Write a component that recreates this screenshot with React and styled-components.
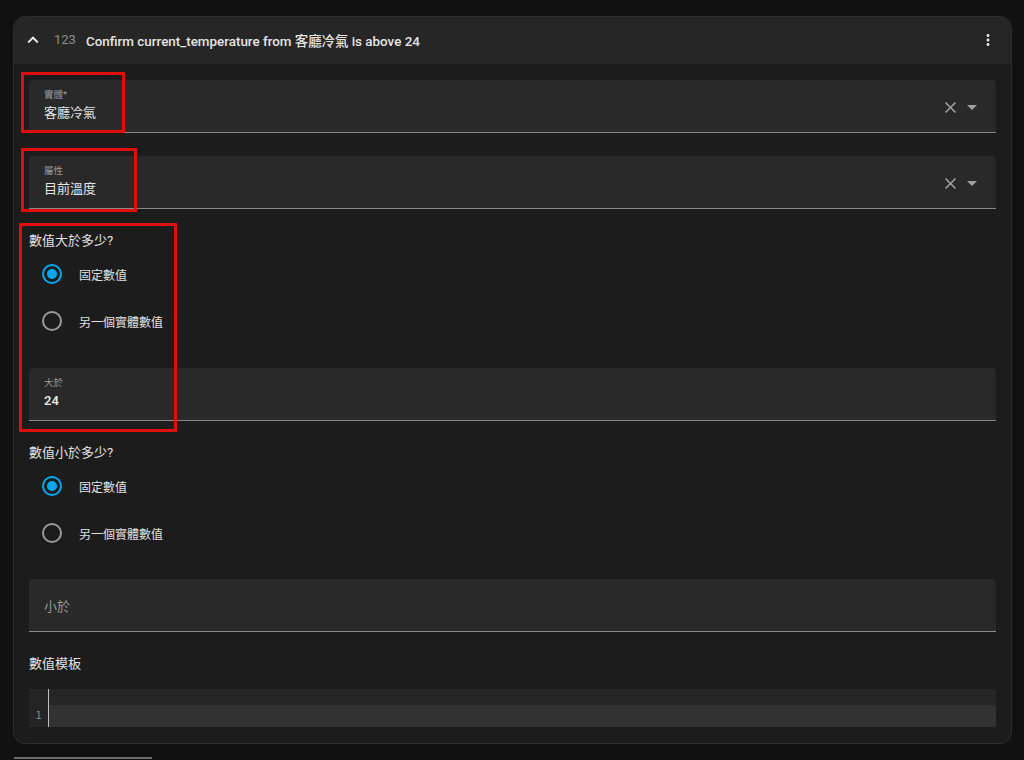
import React from 'react';
import styled, { createGlobalStyle } from 'styled-components';

const GlobalStyle = createGlobalStyle`
  html, body {
    margin: 0;
    padding: 0;
    background: #111111;
  }
  body {
    font-family: Roboto, "Noto Sans CJK TC", "Noto Sans", sans-serif;
    color: #e1e1e1;
  }
`;

const Page = styled.div`
  width: 1024px;
  height: 760px;
  overflow: hidden;
  position: relative;
  padding: 16px 12px 0 13px;
  box-sizing: border-box;
`;

const Card = styled.section`
  width: 999px;
  background: #1c1c1c;
  border: 1px solid #2c2c2c;
  border-radius: 12px;
  overflow: hidden;
  box-sizing: border-box;
`;

const Header = styled.header`
  height: 47px;
  background: #262626;
  display: flex;
  align-items: center;
  padding: 0 14px 2px 8px;
  box-sizing: border-box;
`;

const HeaderIcon = styled.span`
  width: 22px;
  flex-shrink: 0;
  display: flex;
  align-items: center;
  justify-content: center;
  color: #e8e8e8;
`;

const Number = styled.span`
  margin-left: 10px;
  font-size: 13px;
  color: #8c8c8c;
  width: 32px;
`;

const Title = styled.span`
  font-size: 13.4px;
  font-weight: 500;
  color: #e4e4e4;
  flex: 1;
`;

const Body = styled.div`
  padding: 16px 15px 16px 15px;
  display: flex;
  flex-direction: column;
`;

const Field = styled.div`
  height: 52px;
  background: #292929;
  border-radius: 4px 4px 0 0;
  border-bottom: 1px solid #8a8a8a;
  display: flex;
  align-items: center;
  padding: 0 12px 0 15px;
  margin-top: ${p => p.$mt || 0}px;
`;

const FieldText = styled.div`
  flex: 1;
  display: flex;
  flex-direction: column;
  justify-content: center;
  margin-top: -1px;
`;

const FieldLabel = styled.div`
  font-size: 9.5px;
  color: #9a9a9a;
  line-height: 12px;
`;

const FieldValue = styled.div`
  font-size: 13px;
  color: #e4e4e4;
  line-height: 20px;
  margin-top: 2px;
  font-weight: ${p => (p.$bold ? 600 : 400)};
`;

const Placeholder = styled.div`
  font-size: 13px;
  color: #9a9a9a;
`;

const Trailing = styled.div`
  display: flex;
  align-items: center;
  gap: 0;
  color: #a0a0a0;
  padding-top: 2px;
`;

const Heading = styled.div`
  font-size: 13px;
  line-height: 20px;
  color: #e1e1e1;
  margin-top: ${p => p.$mt}px;
`;

const RadioRow = styled.label`
  height: 47px;
  display: flex;
  align-items: center;
  padding-left: 13px;
  padding-bottom: 1px;
  box-sizing: border-box;
  font-size: 12px;
  color: #e1e1e1;
`;

const RadioCircle = styled.span`
  width: 16px;
  height: 16px;
  border-radius: 50%;
  border: 2px solid ${p => (p.$checked ? '#03a9f4' : '#9a9a9a')};
  display: flex;
  align-items: center;
  justify-content: center;
  margin-right: 17px;
  &::after {
    content: '';
    width: 10px;
    height: 10px;
    border-radius: 50%;
    background: ${p => (p.$checked ? '#03a9f4' : 'transparent')};
  }
`;

const Editor = styled.div`
  margin-top: 15px;
  height: 38px;
  background: #262626;
  display: flex;
  border-radius: 2px;
  overflow: hidden;
`;

const Gutter = styled.div`
  width: 20px;
  border-right: 1px solid #bdbdbd;
  display: flex;
  align-items: flex-end;
  justify-content: center;
  padding-bottom: 6px;
  box-sizing: border-box;
  font-family: "DejaVu Sans Mono", monospace;
  font-size: 10px;
  color: #8a8a8a;
  background: #242424;
`;

const Lines = styled.div`
  flex: 1;
  display: flex;
  flex-direction: column;
  justify-content: flex-end;
`;

const ActiveLine = styled.div`
  height: 22px;
  background: #323232;
  box-shadow: 0 1px 0 #2a2a2a;
`;

const Outline = styled.div`
  position: absolute;
  border: 3px solid #e00d0d;
  box-sizing: border-box;
  pointer-events: none;
`;

const NextCardEdge = styled.div`
  position: absolute;
  left: 14px;
  top: 757px;
  width: 138px;
  height: 2px;
  background: #6a6a6a;
`;

const ChevronUp = () => (
  <svg width="22" height="22" viewBox="0 0 24 24">
    <path d="M7.41 15.41L12 10.83l4.59 4.58L18 14l-6-6-6 6z" fill="currentColor" />
  </svg>
);

const Kebab = () => (
  <svg width="18" height="18" viewBox="0 0 24 24">
    <path
      d="M12 8c1.1 0 2-.9 2-2s-.9-2-2-2-2 .9-2 2 .9 2 2 2zm0 2c-1.1 0-2 .9-2 2s.9 2 2 2 2-.9 2-2-.9-2-2-2zm0 6c-1.1 0-2 .9-2 2s.9 2 2 2 2-.9 2-2-.9-2-2-2z"
      fill="#e1e1e1"
    />
  </svg>
);

const ClearIcon = () => (
  <svg width="19" height="19" viewBox="0 0 24 24">
    <path
      d="M19 6.41L17.59 5 12 10.59 6.41 5 5 6.41 10.59 12 5 17.59 6.41 19 12 13.41 17.59 19 19 17.59 13.41 12z"
      fill="currentColor"
    />
  </svg>
);

const CaretDown = () => (
  <svg width="24" height="24" viewBox="0 0 24 24">
    <path d="M7 10l5 5 5-5z" fill="currentColor" />
  </svg>
);

const SelectField = ({ label, value, mt }) => (
  <Field $mt={mt}>
    <FieldText>
      <FieldLabel>{label}</FieldLabel>
      <FieldValue>{value}</FieldValue>
    </FieldText>
    <Trailing>
      <ClearIcon />
      <CaretDown />
    </Trailing>
  </Field>
);

const Radio = ({ checked, children }) => (
  <RadioRow>
    <RadioCircle $checked={checked} />
    {children}
  </RadioRow>
);

export default function App() {
  return (
    <>
      <GlobalStyle />
      <Page>
        <Card>
          <Header>
            <HeaderIcon>
              <ChevronUp />
            </HeaderIcon>
            <Number>123</Number>
            <Title>Confirm current_temperature from 客廳冷氣 is above 24</Title>
            <Kebab />
          </Header>
          <Body>
            <SelectField label="實體*" value="客廳冷氣" />
            <SelectField label="屬性" value="目前溫度" mt={23} />

            <Heading $mt={22}>數值大於多少?</Heading>
            <Radio checked>固定數值</Radio>
            <Radio>另一個實體數值</Radio>
            <Field $mt={23}>
              <FieldText>
                <FieldLabel>大於</FieldLabel>
                <FieldValue $bold>24</FieldValue>
              </FieldText>
            </Field>

            <Heading $mt={22}>數值小於多少?</Heading>
            <Radio checked>固定數值</Radio>
            <Radio>另一個實體數值</Radio>
            <Field $mt={22}>
              <Placeholder>小於</Placeholder>
            </Field>

            <Heading $mt={22}>數值模板</Heading>
            <Editor>
              <Gutter>1</Gutter>
              <Lines>
                <ActiveLine />
              </Lines>
            </Editor>
          </Body>
        </Card>
        <Outline style={{ left: 21, top: 72, width: 104, height: 61 }} />
        <Outline style={{ left: 21, top: 148, width: 116, height: 64 }} />
        <Outline style={{ left: 19, top: 223, width: 158, height: 209 }} />
        <NextCardEdge />
      </Page>
    </>
  );
}
